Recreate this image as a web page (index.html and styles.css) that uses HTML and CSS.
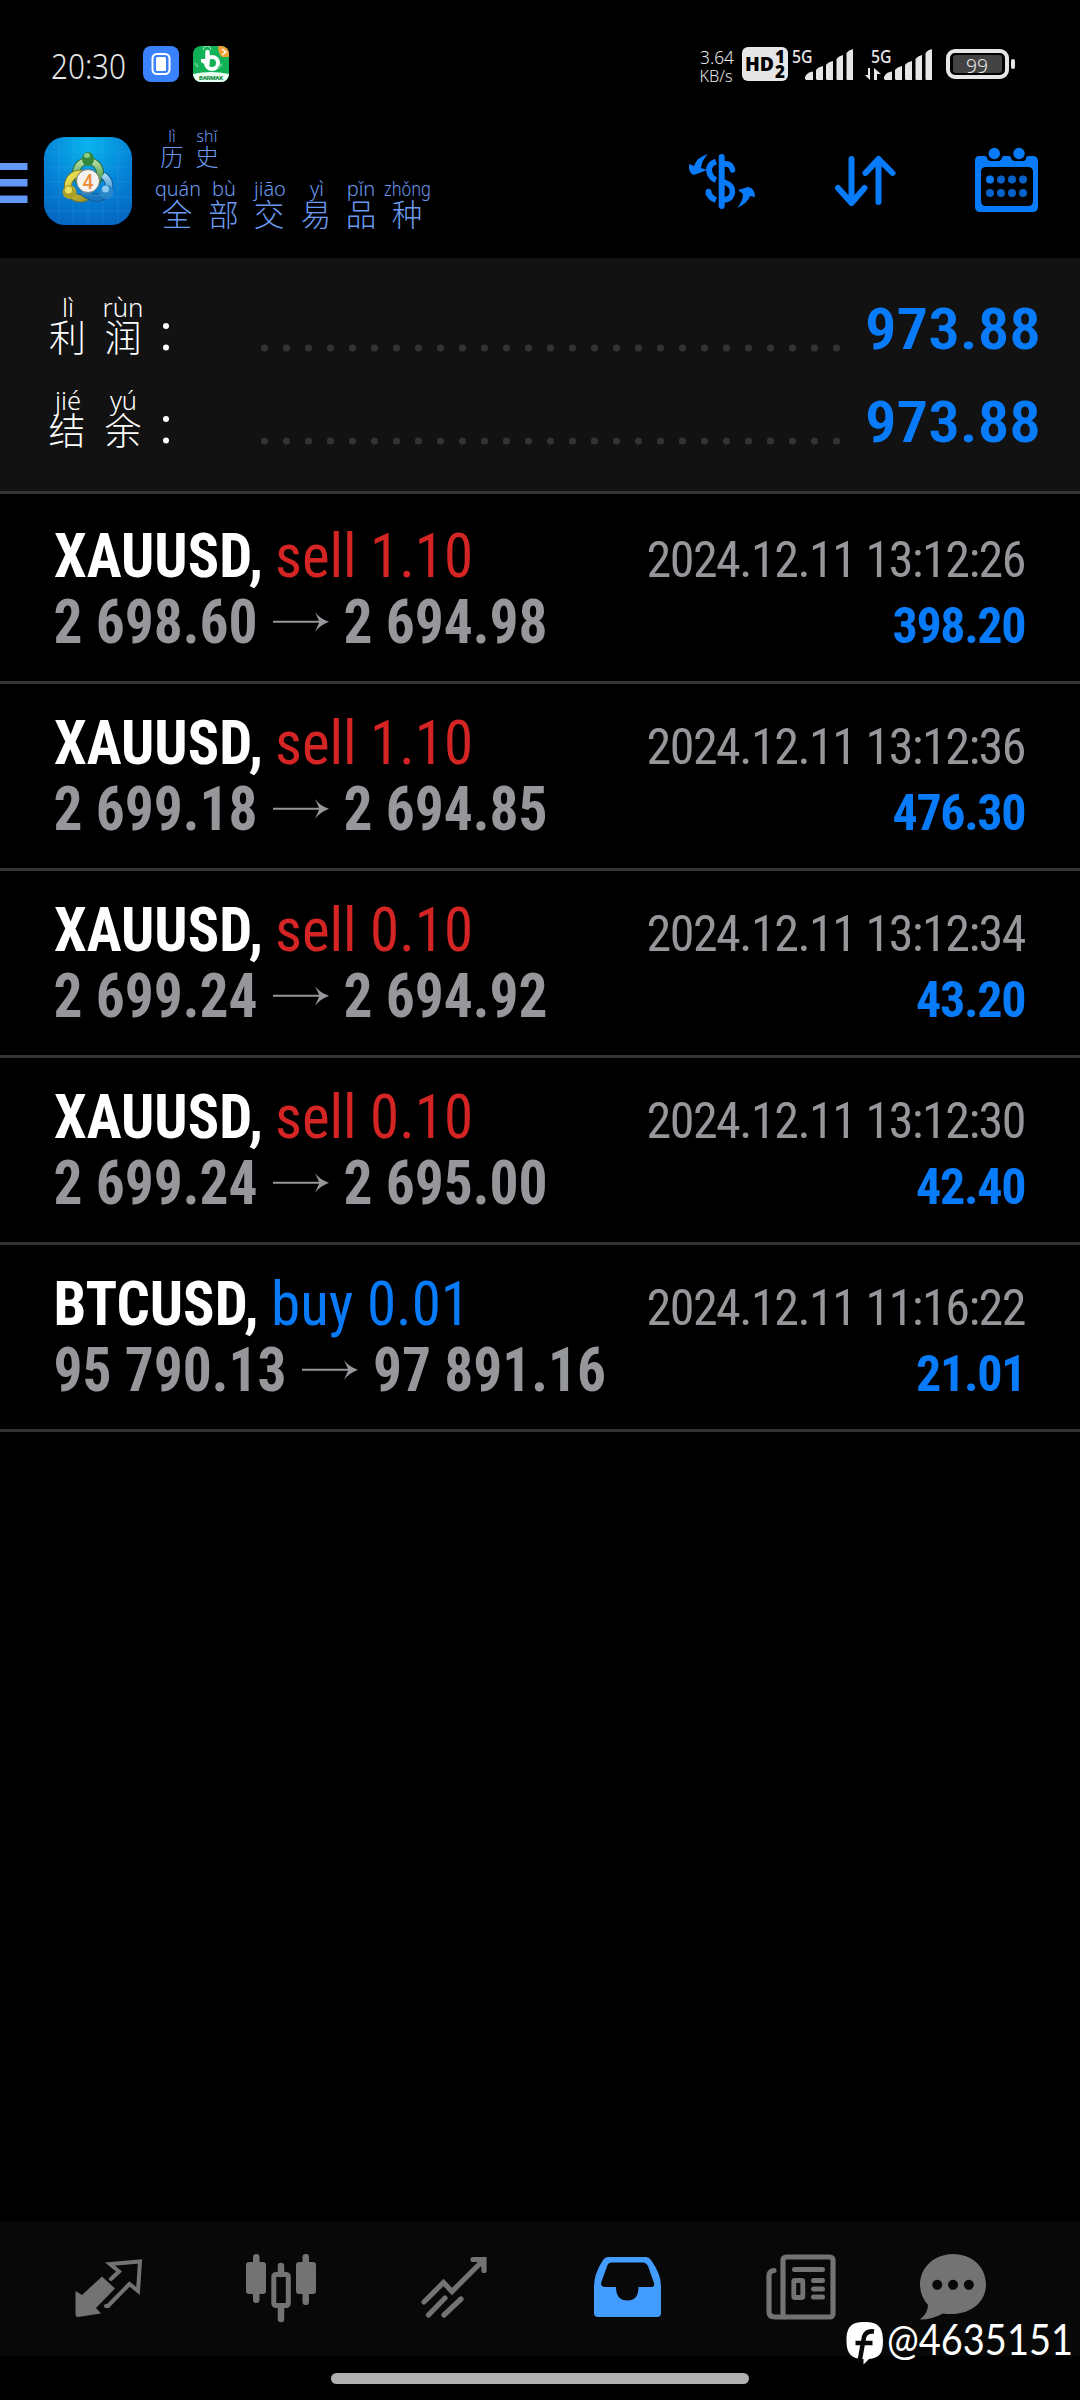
FILE: index.html
```html
<!DOCTYPE html>
<html lang="zh-CN">
<head>
<meta charset="utf-8">
<title>历史</title>
<link rel="stylesheet" href="styles.css">
</head>
<body>
<main class="screen">
  <div class="status">
    <svg class="status-left" viewBox="0 0 240 124">
      <text class="light" x="51" y="79" font-size="34" textLength="75" lengthAdjust="spacingAndGlyphs">20:30</text>
      <rect x="143" y="46" width="36" height="36" rx="8" fill="#3a82fb"/>
      <rect x="152.5" y="54" width="17" height="20" rx="4.5" fill="none" stroke="#fff" stroke-width="2"/>
      <rect x="156" y="57" width="10" height="14" rx="1.5" fill="#fff"/>
      <clipPath id="tile"><rect x="193" y="46" width="36" height="36" rx="8"/></clipPath>
      <g clip-path="url(#tile)">
        <rect x="193" y="46" width="36" height="36" fill="#11b257"/>
        <path d="M218 46H229V57H222Q218 54 218 46Z" fill="#f0a030"/>
        <path d="M222 49l4 3-4 3" fill="none" stroke="#fff" stroke-width="1.5"/>
        <path d="M193 74Q211 70 229 74V82H193Z" fill="#e9fff1"/>
        <path d="M203 50a4 4 0 0 1 8 0" fill="none" stroke="#9be8b9" stroke-width="1"/>
        <path d="M207.500 52V64" stroke="#fff" stroke-width="4.500" stroke-linecap="round"/>
        <circle cx="212" cy="63" r="6" fill="none" stroke="#fff" stroke-width="4"/>
        <path d="M206 65l-5-3v-3h5" fill="#fff"/>
        <path d="M195 63l3 4M218 68l4-4" stroke="#68cf90" stroke-width="2"/>
        <text x="199" y="79.500" font-size="6" font-weight="900" textLength="24" fill="#12873f">BARMAK</text>
      </g>
    </svg>
    <svg class="status-right" viewBox="690 0 390 124" fill="#e6e6e6">
      <text class="light" x="700" y="63.500" font-size="18" textLength="34" lengthAdjust="spacingAndGlyphs">3.64</text>
      <text class="light" x="699.500" y="81.500" font-size="16.500" textLength="33" lengthAdjust="spacingAndGlyphs">KB/s</text>
      <rect x="742" y="47" width="46" height="34" rx="6"/>
      <text class="hd" x="745" y="71" font-size="20" textLength="29" lengthAdjust="spacingAndGlyphs">HD</text>
      <text class="hd" x="775" y="63" font-size="17">1</text>
      <text class="hd" x="775" y="77.500" font-size="17">2</text>
      <g id="signal">
        <text class="fiveg" x="792" y="63" font-size="17.500" textLength="20.500" lengthAdjust="spacingAndGlyphs">5G</text>
        <path d="M805 79v-2q1-3 4-4.500l4-1v8.500h-7zM816 79V70q2-3 7-4v14h-6zM826 79V65q2-3 7-4v19h-6zM836.500 79V59q2-3 6.500-4v25h-6zM846.500 79V53q2-3 6.500-4v31h-6z"/>
      </g>
      <use href="#signal" x="79"/>
      <path d="M870 68v12l-5-5h3v-7zM874 80V68l7 6h-4v6z"/>
      <rect x="948" y="51" width="59" height="26" rx="7" fill="none" stroke="#e6e6e6" stroke-width="4"/>
      <rect x="953" y="55" width="49" height="18" rx="3" fill="#434343"/>
      <text class="light" x="966" y="73" font-size="20" textLength="22" lengthAdjust="spacingAndGlyphs">99</text>
      <rect x="1011" y="59" width="4" height="10" rx="2"/>
    </svg>
  </div>

  <header class="header">
    <svg class="brand" viewBox="0 124 150 134">
      <defs>
        <radialGradient id="sky" cx=".5" cy=".1" r="1"><stop offset="0" stop-color="#08b4ee"/><stop offset=".5" stop-color="#0584d8"/><stop offset="1" stop-color="#0561bd"/></radialGradient>
        <linearGradient id="green" x2="0" y2="1"><stop stop-color="#b6dda0"/><stop offset="1" stop-color="#2c8a38"/></linearGradient>
        <linearGradient id="yellow" x2="1" y2="1"><stop stop-color="#f3e95a"/><stop offset="1" stop-color="#948b23"/></linearGradient>
        <linearGradient id="blue" x2="0" y2="1"><stop stop-color="#a5d8f2"/><stop offset="1" stop-color="#1674bd"/></linearGradient>
      </defs>
      <path d="M0 163H27.500V170H0ZM0 179H27.500V186.500H0ZM0 195.500H27.500V203H0Z" fill="#6298f8"/>
      <rect x="44" y="137" width="88" height="88" rx="21" fill="url(#sky)"/>
      <path d="M59 138V224M73 137V225M88 137V225M103 137V225M118 138V224M44 152H132M44 167H132M44 182H132M44 197H132M45 211H131" stroke="#58c1f2" stroke-opacity=".16" stroke-width="1"/>
      <circle cx="88" cy="173" r="12" fill="none" stroke="#266b36" stroke-width="8"/>
      <circle cx="88" cy="173" r="12" fill="none" stroke="url(#green)" stroke-width="6"/>
      <path d="M84 174A12.500 12.500 0 1 0 90 194" fill="none" stroke="#6c7632" stroke-width="8"/>
      <path d="M84 174A12.500 12.500 0 1 0 90 194" fill="none" stroke="url(#yellow)" stroke-width="6"/>
      <path d="M103 175Q112 182 108 192Q97 204 82 191" fill="none" stroke="#125c97" stroke-width="8"/>
      <path d="M103 175Q112 182 108 192Q97 204 82 191" fill="none" stroke="url(#blue)" stroke-width="6"/>
      <ellipse cx="88" cy="159" rx="6" ry="7" fill="#32893c"/><ellipse cx="87" cy="155.500" rx="3" ry="2.500" fill="#91cd88"/>
      <circle cx="69.500" cy="192" r="7" fill="#aaa12c"/><circle cx="68.500" cy="190" r="3.500" fill="#e6df62"/>
      <circle cx="106.500" cy="192" r="7" fill="#2987ca"/><circle cx="105.500" cy="189" r="3.500" fill="#8accf1"/>
      <circle cx="88" cy="181" r="11.500" fill="#f5f3ef" stroke="#777"/>
      <text x="82.500" y="188.500" font-size="21" font-weight="500" textLength="11" lengthAdjust="spacingAndGlyphs" fill="#ed8c3c">4</text>
    </svg>
    <svg class="titles" viewBox="150 124 300 134" fill="#6b9bf0">
      <g class="pinyin" font-size="16">
        <text x="172" y="142">lì</text><text x="207" y="142">shǐ</text>
      </g>
      <g class="hanzi" font-size="23.500">
        <text x="172" y="165.500">历</text><text x="207" y="165.500">史</text>
      </g>
      <g class="pinyin" font-size="20">
        <text class="start" x="155" y="195.500" textLength="46" lengthAdjust="spacingAndGlyphs">quán</text><text x="224" y="195.500">bù</text><text x="270" y="195.500">jiāo</text><text x="317" y="195.500">yì</text><text x="361" y="195.500">pǐn</text>
        <text class="start" x="384" y="195.500" textLength="47" lengthAdjust="spacingAndGlyphs">zhǒng</text>
      </g>
      <g class="hanzi" font-size="30.500">
        <text x="177" y="225.500">全</text><text x="223.500" y="225.500">部</text><text x="269" y="225.500">交</text><text x="316" y="225.500">易</text><text x="361" y="225.500">品</text><text x="407" y="225.500">种</text>
      </g>
    </svg>
    <svg class="actions" viewBox="660 124 420 134" fill="none" stroke="#087bfb" stroke-linecap="round" stroke-linejoin="round">
      <path d="M721.700 157V206" stroke-width="6"/>
      <path d="M724 164Q731 163 732.500 170M724 182Q733 185 732.500 192Q732 199 724 200" stroke-width="5.500"/>
      <path d="M716 161.500Q709 164 709 170Q710 178 716 180M708 192Q710 198 716 200" stroke-width="6" stroke-linecap="butt"/>
      <circle cx="708.500" cy="191.500" r="2.800" fill="#087bfb" stroke="none"/>
      <path d="M708 154Q697 157 694 166L689 164Q688 173 694 175L707 170L701 168Q702 160 708 154ZM737 208Q748 203 750 196L755 197Q755 188 748 187L738 190L743 194Q743 201 737 208Z" fill="#087bfb" stroke="none"/>
      <path d="M851.500 159V202M838 188L851.500 203L864.500 188M878.500 202V159M865.500 173L878.500 159L892.500 173" stroke-width="6"/>
      <g stroke="none" fill="#087bfb">
        <path fill-rule="evenodd" d="M979 156H985Q987 156 987 158Q988 161 990 161H999Q1001 161 1002 158Q1002 156 1004 156H1009Q1011 156 1011 158Q1012 161 1015 161H1023Q1026 161 1026 158Q1026 156 1029 156H1034Q1038 157 1038 161V207Q1038 211 1034 212H979Q975 211 975 207V161Q975 156 979 156ZM986 167Q981 167 981 172V201Q981 206 986 206H1028Q1033 206 1033 201V172Q1033 167 1028 167Z"/>
        <circle cx="994.300" cy="153.500" r="5.700"/><circle cx="1019" cy="153.500" r="5.700"/>
        <circle cx="990" cy="179.500" r="4"/>
        <g opacity=".8"><circle cx="1001" cy="179.500" r="4"/><circle cx="1012" cy="179.500" r="4"/><circle cx="1023" cy="179.500" r="4"/><circle cx="990" cy="193" r="4"/><circle cx="1001" cy="193" r="4"/><circle cx="1012" cy="193" r="4"/><circle cx="1023" cy="193" r="4"/></g>
      </g>
    </svg>
  </header>

  <section class="summary">
    <div class="sum-row">
      <svg class="sum-label" viewBox="0 0 180 93">
        <g class="pinyin" font-size="25.500"><text x="68" y="47.500">lì</text><text x="123" y="47.500" textLength="41" lengthAdjust="spacingAndGlyphs">rùn</text></g>
        <g class="hanzi" font-size="37"><text x="67.500" y="82.500">利</text><text x="123" y="82.500">润</text></g>
        <circle cx="166" cy="57" r="3"/><circle cx="166" cy="78.500" r="3"/>
      </svg>
      <svg class="leader" viewBox="0 0 576 8"><path d="M4.500 4H577"/></svg>
      <svg class="sum-value" viewBox="0 0 176 93"><text x="0" y="80" textLength="176" lengthAdjust="spacingAndGlyphs">973.88</text></svg>
    </div>
    <div class="sum-row">
      <svg class="sum-label" viewBox="0 0 180 93">
        <g class="pinyin" font-size="25.500"><text x="68" y="47.500">jié</text><text x="123.500" y="47.500">yú</text></g>
        <g class="hanzi" font-size="37"><text x="67" y="82.500">结</text><text x="123" y="82.500">余</text></g>
        <circle cx="166" cy="57" r="3"/><circle cx="166" cy="78.500" r="3"/>
      </svg>
      <svg class="leader" viewBox="0 0 576 8"><path d="M4.500 4H577"/></svg>
      <svg class="sum-value" viewBox="0 0 176 93"><text x="0" y="80" textLength="176" lengthAdjust="spacingAndGlyphs">973.88</text></svg>
    </div>
  </section>

  <section class="deals">
    <article class="deal">
      <svg class="trade" viewBox="0 0 620 184"><text class="symbol" x="54" y="80" textLength="209" lengthAdjust="spacingAndGlyphs">XAUUSD,</text><text class="sell" x="275" y="80" textLength="198" lengthAdjust="spacingAndGlyphs">sell 1.10</text><text class="price" x="53.500" y="146" textLength="204" lengthAdjust="spacingAndGlyphs">2 698.60</text><use href="#arrow" x="273"/><text class="price" x="343.500" y="146" textLength="204" lengthAdjust="spacingAndGlyphs">2 694.98</text></svg>
      <svg class="result" viewBox="620 0 460 184"><text class="date" x="646.500" y="80" textLength="380">2024.12.11 13:12:26</text><text class="profit" x="892.500" y="146" textLength="134">398.20</text></svg>
    </article>
    <article class="deal">
      <svg class="trade" viewBox="0 0 620 184"><text class="symbol" x="54" y="80" textLength="209" lengthAdjust="spacingAndGlyphs">XAUUSD,</text><text class="sell" x="275" y="80" textLength="198" lengthAdjust="spacingAndGlyphs">sell 1.10</text><text class="price" x="53.500" y="146" textLength="204" lengthAdjust="spacingAndGlyphs">2 699.18</text><use href="#arrow" x="273"/><text class="price" x="343.500" y="146" textLength="204" lengthAdjust="spacingAndGlyphs">2 694.85</text></svg>
      <svg class="result" viewBox="620 0 460 184"><text class="date" x="646.500" y="80" textLength="380">2024.12.11 13:12:36</text><text class="profit" x="892.500" y="146" textLength="134">476.30</text></svg>
    </article>
    <article class="deal">
      <svg class="trade" viewBox="0 0 620 184"><text class="symbol" x="54" y="80" textLength="209" lengthAdjust="spacingAndGlyphs">XAUUSD,</text><text class="sell" x="275" y="80" textLength="198" lengthAdjust="spacingAndGlyphs">sell 0.10</text><text class="price" x="53.500" y="146" textLength="204" lengthAdjust="spacingAndGlyphs">2 699.24</text><use href="#arrow" x="273"/><text class="price" x="343.500" y="146" textLength="204" lengthAdjust="spacingAndGlyphs">2 694.92</text></svg>
      <svg class="result" viewBox="620 0 460 184"><text class="date" x="646.500" y="80" textLength="380">2024.12.11 13:12:34</text><text class="profit" x="916" y="146" textLength="110.500">43.20</text></svg>
    </article>
    <article class="deal">
      <svg class="trade" viewBox="0 0 620 184"><text class="symbol" x="54" y="80" textLength="209" lengthAdjust="spacingAndGlyphs">XAUUSD,</text><text class="sell" x="275" y="80" textLength="198" lengthAdjust="spacingAndGlyphs">sell 0.10</text><text class="price" x="53.500" y="146" textLength="204" lengthAdjust="spacingAndGlyphs">2 699.24</text><use href="#arrow" x="273"/><text class="price" x="343.500" y="146" textLength="204" lengthAdjust="spacingAndGlyphs">2 695.00</text></svg>
      <svg class="result" viewBox="620 0 460 184"><text class="date" x="646.500" y="80" textLength="380">2024.12.11 13:12:30</text><text class="profit" x="916" y="146" textLength="110.500">42.40</text></svg>
    </article>
    <article class="deal">
      <svg class="trade" viewBox="0 0 620 184"><defs><path id="arrow" d="M0 123.700H46L42 115Q47 122 56 124.700Q47 128 42 135L46 125.700H0Z" fill="#96979b"/></defs><text class="symbol" x="53.500" y="80" textLength="205" lengthAdjust="spacingAndGlyphs">BTCUSD,</text><text class="buy" x="271" y="80" textLength="199" lengthAdjust="spacingAndGlyphs">buy 0.01</text><text class="price" x="53.500" y="146" textLength="233" lengthAdjust="spacingAndGlyphs">95 790.13</text><use href="#arrow" x="302"/><text class="price" x="373" y="146" textLength="233" lengthAdjust="spacingAndGlyphs">97 891.16</text></svg>
      <svg class="result" viewBox="620 0 460 184"><text class="date" x="646.500" y="80" textLength="380">2024.12.11 11:16:22</text><text class="profit" x="916" y="146" textLength="110.500">21.01</text></svg>
    </article>
  </section>

  <nav class="tabs">
    <svg viewBox="22 2221 173 135"><path d="M75.500 2291L82 2295L102 2276.500L115 2288.500L96 2308L101 2313.500L78 2317Q75.500 2317 75.500 2314Z"/><path class="line" d="M111 2279L119 2271.500L110 2264L140 2261.500L138 2291L129.500 2284L108 2306H106" stroke-width="4"/></svg>
    <svg viewBox="195 2221 173 135"><rect x="253" y="2254" width="6.500" height="49" rx="3"/><rect x="246" y="2262" width="20" height="32" rx="3"/><rect x="302.500" y="2254" width="6.500" height="51" rx="3"/><rect x="296" y="2262" width="20" height="32" rx="3"/><path class="line" d="M281 2266V2274M281 2308V2319" stroke-width="6.500"/><rect class="line" x="273.800" y="2274.500" width="14.500" height="31" rx="2" stroke-width="5"/></svg>
    <svg viewBox="368 2221 173 135"><path class="line" d="M424 2302L443.500 2282.500L452 2291.500L484 2259.500M473 2259.500H484V2270.500M428.500 2315L445 2298M444 2315L461 2299" stroke-width="5.200"/><path d="M475 2260H484V2270Z"/></svg>
    <svg class="active" viewBox="541 2221 173 135"><path fill-rule="evenodd" d="M608 2257H646Q649 2257 651 2260Q661 2274 661 2286V2313Q661 2317 657 2317H598Q594 2317 594 2313V2286Q594 2274 603 2260Q605 2257 608 2257ZM611 2262.500Q608.500 2262.500 607.500 2265L601 2283Q601 2287 605 2287H616Q616 2300.500 627.500 2300.500Q638.500 2300.500 638.500 2287H651Q655 2287 654 2283L648 2266Q646 2262.500 643 2262.500Z"/></svg>
    <svg viewBox="714 2221 173 135"><rect class="line" x="783" y="2257" width="50" height="60" rx="3" stroke-width="5.200"/><path class="line" d="M774 2270.500Q769 2271 769 2276V2312Q769 2317 775 2317H784" stroke-width="5.200"/><path class="line" d="M794.500 2269.500H822.500M813.500 2280.500H822.500M813.500 2289H822.500M813.500 2297H822.500" stroke-width="5"/><rect class="line" x="793.800" y="2280.500" width="9" height="17" rx="1" stroke-width="4.800"/></svg>
    <svg class="chat" viewBox="867 2221 173 135"><path fill-rule="evenodd" d="M953 2254C973 2254 986 2268 986 2284.500C986 2303 969 2317 943 2313.500Q931 2320 920 2319.500Q928 2313 928 2305Q920 2296 920 2284.500C920 2268 934 2254 953 2254ZM937.200 2279.800a5 5 0 1 0 .1 0ZM953 2279.800a5 5 0 1 0 .1 0ZM968.800 2279.800a5 5 0 1 0 .1 0Z"/></svg>
  </nav>
  <footer class="home"><div class="home-bar"></div></footer>

  <svg class="watermark" viewBox="840 2310 240 65"><path d="M864.500 2322C878 2322 883 2327 883 2341C883 2354 879 2358 869 2359L863.500 2364.500V2359C851 2359 846.500 2353 846.500 2341C846.500 2327 851 2322 864.500 2322Z" fill="#fff"/><path d="M859.500 2362L864 2337Q866 2330.500 874 2331.500M855.500 2343H872.500" fill="none" stroke="#080808" stroke-width="4.500"/><text x="887" y="2355" textLength="186" lengthAdjust="spacingAndGlyphs">@4635151</text></svg>
</main>
</body>
</html>
```
FILE: styles.css
```css
* { box-sizing: border-box; }
body { margin: 0; background: #000; }
svg { display: block; flex: none; overflow: visible; }
svg text { font-family: Roboto, "Noto Sans", "Noto Sans CJK SC", sans-serif; white-space: pre; }

.screen { position: relative; display: flex; flex-direction: column; width: 1080px; height: 2400px; background: #000; overflow: hidden; }

.status { display: flex; justify-content: space-between; height: 124px; }
.status-left { width: 240px; height: 124px; }
.status-right { width: 390px; height: 124px; }
.status .light { font-family: "Noto Sans", sans-serif; font-weight: 300; fill: #e6e6e6; }
.status .hd { font-family: "Open Sans", sans-serif; font-weight: 800; fill: #000; }
.status .fiveg { font-family: "Noto Sans", sans-serif; font-weight: 500; }

.header { display: flex; height: 134px; }
.brand { width: 150px; height: 134px; }
.titles { width: 300px; height: 134px; }
.actions { width: 420px; height: 134px; margin-left: auto; }
.pinyin text { font-family: "Noto Sans", sans-serif; font-weight: 350; text-anchor: middle; }
.pinyin text.start { text-anchor: start; }
.hanzi text { font-family: "Noto Sans CJK SC", sans-serif; font-weight: 300; text-anchor: middle; }

.summary { height: 236px; padding-top: 11px; background: #121212; border-bottom: 3px solid #333; fill: #fff; }
.sum-row { display: flex; height: 93px; }
.sum-label { width: 180px; height: 93px; margin-right: 80px; }
.leader { width: 576px; height: 8px; margin-top: 74.500px; }
.leader path { stroke: #333; stroke-width: 7.200; stroke-linecap: round; stroke-dasharray: 0 22; }
.sum-value { width: 176px; height: 93px; margin-left: 29px; }
.sum-value text { font-size: 56.500px; font-weight: 650; font-stretch: 75%; fill: #087bfb; }

.deals { padding-top: 3px; }
.deal { display: flex; height: 187px; border-bottom: 3px solid #333; }
.trade { width: 620px; height: 184px; }
.result { width: 460px; height: 184px; }
.deal text { font-stretch: 75%; font-size: 61px; }
.deal .symbol { font-weight: 700; fill: #fff; }
.deal .sell { fill: #d42424; }
.deal .buy { fill: #087bfb; }
.deal .price { font-weight: 700; fill: #96979b; }
.deal .date { font-size: 50px; fill: #96979b; }
.deal .profit { font-size: 50px; font-weight: 700; fill: #087bfb; }

.tabs { display: flex; height: 135px; margin-top: auto; padding-left: 22px; background: #080808; fill: #737373; }
.tabs svg { width: 173px; height: 135px; }
.tabs .line { fill: none; stroke: #737373; stroke-linecap: round; stroke-linejoin: miter; }
.tabs .active { fill: #439cff; }
.tabs .chat { margin-left: -20px; }
.home { display: flex; justify-content: center; height: 44px; padding-top: 17px; }
.home-bar { width: 418px; height: 11px; border-radius: 6px; background: #b0b0b0; }

.watermark { position: absolute; left: 840px; top: 2310px; width: 240px; height: 65px; }
.watermark text { font-family: Lato, "Noto Sans", sans-serif; font-size: 42px; font-weight: 400; fill: #fff; }
```
